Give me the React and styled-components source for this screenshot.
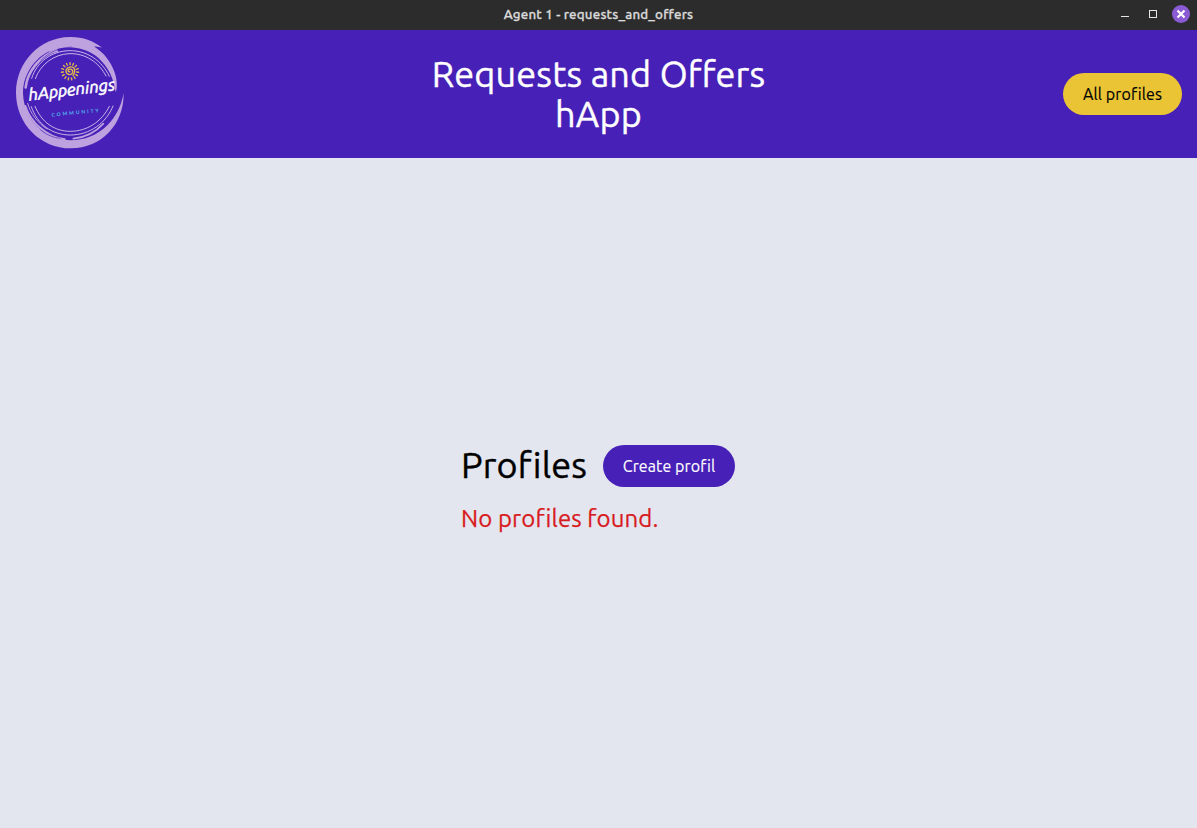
import React from "react";
import styled, { createGlobalStyle } from "styled-components";

const GlobalStyle = createGlobalStyle`
  * { box-sizing: border-box; }
  html, body { margin: 0; padding: 0; background: #e3e6ee; }
  body { font-family: Ubuntu, "Noto Sans", sans-serif; overflow: hidden; }
`;

const Window = styled.div`
  display: flex;
  flex-direction: column;
  height: 100vh;
`;

const TitleBar = styled.div`
  display: grid;
  grid-template-columns: 1fr auto 1fr;
  align-items: center;
  height: 30px;
  background: #2c2c2c;
`;

const WindowTitle = styled.div`
  grid-column: 2;
  color: #dadada;
  font-size: 13.33px;
  font-weight: 500;
  -webkit-text-stroke: 0.3px;
  line-height: 30px;
  height: 30px;
  white-space: nowrap;
  letter-spacing: ${(p) => p.$spacing};
`;

const WindowControls = styled.div`
  justify-self: end;
  display: flex;
  align-items: center;
  height: 28px;
  padding-right: 7px;
  margin-bottom: 2px;
`;

const Header = styled.header`
  display: grid;
  grid-template-columns: 1fr 344px 1fr;
  align-items: center;
  flex: none;
  height: 128px;
  padding: 0 15px;
  background: #4720b7;
`;

const HeaderTitle = styled.h1`
  margin: 0;
  color: #fff;
  font-size: 36px;
  font-weight: 400;
  -webkit-text-stroke: 0.4px;
  line-height: 40px;
  text-align: center;
  letter-spacing: ${(p) => p.$spacing};
`;

const TitleLine = styled.span`
  display: block;
  white-space: nowrap;
`;

const Button = styled.button`
  flex: none;
  justify-self: end;
  width: ${(p) => p.$width};
  height: 42px;
  padding: 0;
  border: 0;
  border-radius: 21px;
  background: ${(p) => (p.$accent ? "#eac435" : "#4720b7")};
  color: ${(p) => (p.$accent ? "#000" : "#fff")};
  font: inherit;
  font-size: 16px;
  -webkit-text-stroke: 0.15px;
  line-height: 42px;
  white-space: nowrap;
  letter-spacing: ${(p) => p.$spacing};
`;

const Main = styled.main`
  flex: 1;
  display: flex;
  align-items: center;
  justify-content: center;
`;

const Profiles = styled.section`
  display: flex;
  flex-direction: column;
  gap: 16px;
  width: 274px;
  margin-right: 1px;
  padding-bottom: 6px;
`;

const ProfilesHead = styled.div`
  display: flex;
  align-items: center;
  justify-content: space-between;
`;

const Heading = styled.h2`
  margin: 0;
  padding-bottom: 2px;
  color: #000;
  font-size: 36px;
  font-weight: 400;
  -webkit-text-stroke: 0.4px;
  line-height: 40px;
  letter-spacing: ${(p) => p.$spacing};
`;

const EmptyMessage = styled.p`
  margin: 0;
  color: #d81b1e;
  font-size: 24px;
  -webkit-text-stroke: 0.25px;
  line-height: 32px;
  white-space: nowrap;
  letter-spacing: ${(p) => p.$spacing};
`;

const LogoDrawing = styled.svg`
  margin-left: -5px;
`;

function Logo() {
  const rays = Array.from({ length: 15 }, (_, i) => (i * 360) / 15);
  return (
    <LogoDrawing width="120" height="128" viewBox="0 0 360 384" fill="none" strokeLinecap="round">
      <path
        fill="#bea2df"
        d="M276 53C250 32 215 20 180 21C88 22 18 98 18 188C18 282 92 355 182 355C276 355 342 282 341 190C333 230 318 260 292 286C262 316 222 331 182 331C154 331 126 323 103 307C64 281 40 237 39 190C38 150 58 112 88 84C120 58 158 50 195 53C232 57 263 76 284 104C304 130 312 156 317 186C324 158 314 124 298 97C286 77 271 63 253 50C262 49 269 52 276 53Z"
      />
      <path fill="#bea2df" d="M222 46C262 58 292 88 305 128C312 150 314 168 318 186C326 152 314 118 296 92C280 68 256 48 222 40Z" />
      <g stroke="#bea2df">
        <path strokeWidth="8" d="M47 172C51 128 87 80 139 61" />
        <path strokeWidth="4" d="M54 146C67 103 102 72 143 64" />
        <path strokeWidth="6" d="M46 228C62 278 111 321 164 328" />
        <path strokeWidth="5" d="M190 326C226 322 257 307 280 281" />
        <path strokeWidth="3" d="M53 220C61 251 84 280 111 297" />
      </g>
      <g stroke="#4720b7" strokeWidth="1.8">
        <path d="M43 160C53 118 80 82 117 65" />
        <path d="M92 300C110 315 130 323 151 325" />
        <path d="M92 92C116 66 150 53 184 51" />
      </g>
      <g stroke="#dacdf0" strokeWidth="2.6">
        <path d="M65 145C80 96 125 63 178 62C231 61 276 92 298 139" />
        <path d="M76 146C91 103 132 73 177 71C226 69 267 97 288 138" />
        <path d="M64 230C82 284 127 315 181 315C239 315 289 279 309 228" />
        <path d="M75 229C94 276 133 304 181 304C230 304 275 276 298 229" />
      </g>
      <g stroke="#e8bd45" strokeWidth="4">
        <path d="M180 125C175 127 172 121 177 118C185 115 191 123 187 129C182 138 167 134 168 122C170 110 187 107 193 116C195 121 194 129 189 136" />
        {rays.map((angle) => (
          <path key={angle} d="M180 104V98" transform={`rotate(${angle} 180 124)`} />
        ))}
      </g>
      <text
        x="57"
        y="212"
        transform="rotate(-7 57 212)"
        fill="#fff"
        stroke="#fff"
        strokeWidth="1.6"
        fontFamily="Ubuntu, sans-serif"
        fontStyle="italic"
        fontWeight="400"
        fontSize="50"
        textLength="262"
        lengthAdjust="spacingAndGlyphs"
      >
        hAppenings
      </text>
      <text
        x="125"
        y="260"
        transform="rotate(-5.5 125 260)"
        fill="#4fb9ec"
        fontFamily="Lato, sans-serif"
        fontWeight="700"
        fontSize="15"
        textLength="142"
      >
        COMMUNITY
      </text>
    </LogoDrawing>
  );
}

function ControlIcons() {
  return (
    <svg width="72" height="28" viewBox="0 0 72 28" fill="none">
      <path d="M3 16.5H11" stroke="#e6e6e6" />
      <rect x="31.5" y="10.5" width="7" height="7" stroke="#e6e6e6" />
      <circle cx="63" cy="14" r="9" fill="#8b5bd6" />
      <path d="M59.5 10.5L66.5 17.5M66.5 10.5L59.5 17.5" stroke="#fff" strokeWidth="2.2" />
    </svg>
  );
}

export default function App() {
  return (
    <>
      <GlobalStyle />
      <Window>
        <TitleBar>
          <WindowTitle $spacing="0.18px">Agent 1 - requests_and_offers</WindowTitle>
          <WindowControls>
            <ControlIcons />
          </WindowControls>
        </TitleBar>
        <Header>
          <Logo />
          <HeaderTitle $spacing="0.17px">
            <TitleLine>Requests and Offers</TitleLine>
            <TitleLine>hApp</TitleLine>
          </HeaderTitle>
          <Button $accent $width="119px" $spacing="0.1px">All profiles</Button>
        </Header>
        <Main>
          <Profiles>
            <ProfilesHead>
              <Heading $spacing="0.15px">Profiles</Heading>
              <Button $width="132px" $spacing="0.1px">Create profil</Button>
            </ProfilesHead>
            <EmptyMessage $spacing="0.1px">No profiles found.</EmptyMessage>
          </Profiles>
        </Main>
      </Window>
    </>
  );
}
